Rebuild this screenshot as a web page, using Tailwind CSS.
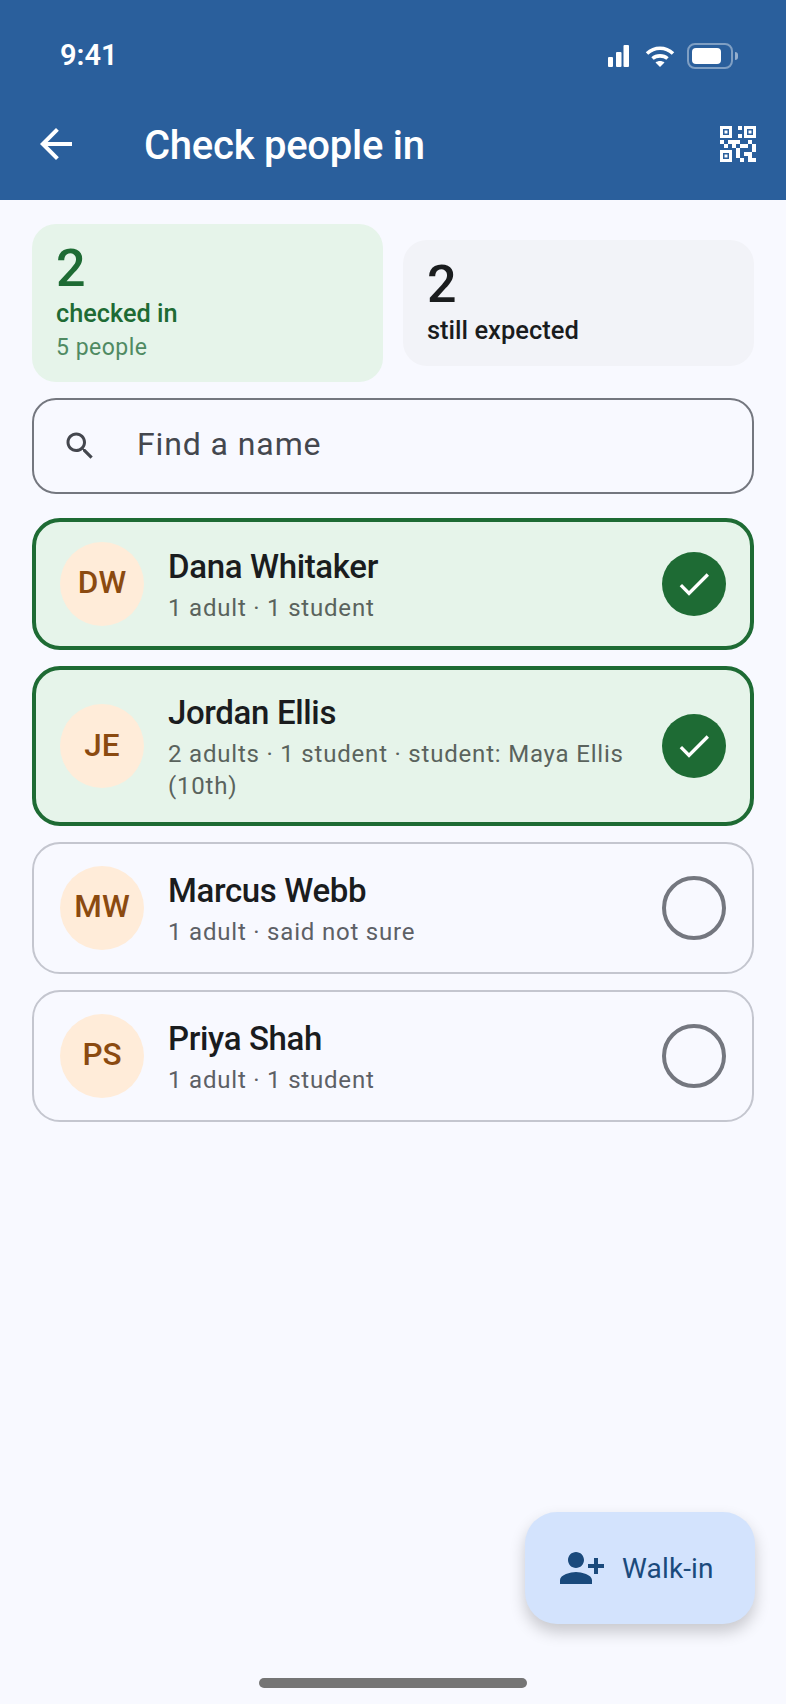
<!DOCTYPE html>
<html lang="en">
<head>
  <meta charset="UTF-8"/>
  <meta name="viewport" content="width=device-width, initial-scale=1.0"/>
  <title>Check people in</title>
  <script src="https://cdn.jsdelivr.net/npm/@tailwindcss/browser@4"></script>
</head>
<body class="bg-[#f8f9ff] font-['Roboto',sans-serif]">
<div class="relative w-[786px] h-[1704px] overflow-hidden bg-[#f8f9ff]">

  <!-- Header -->
  <header class="h-[200px] bg-[#2a5f9c] text-white">
    <!-- Status bar -->
    <div class="h-[112px] pl-[60px] pr-[48px] pt-[38px] flex justify-between items-start">
      <span class="text-[29px] leading-[34px] font-semibold">9:41</span>
      <div class="flex items-center pt-[5px]">
        <svg width="21" height="22" viewBox="0 0 21 22" fill="#fff"><rect x="0" y="12" width="5" height="10" rx="1"/><rect x="8" y="7" width="5.500" height="15" rx="1"/><rect x="15.500" y="0" width="5.500" height="22" rx="1"/></svg>
        <svg class="ml-[16px]" width="30" height="22" viewBox="0 0 30 22" fill="none" stroke="#fff" stroke-width="3.6"><path d="M2 8.5C9.5 1.5 20.500 1.500 28 8.500"/><path d="M7.500 13.500C11.500 10 18.500 10 22.500 13.500"/><path d="M15 22l-4.500-4.500c2.500-2 6.500-2 9 0z" fill="#fff" stroke="none"/></svg>
        <div class="ml-[12px] w-[46px] h-[26px] rounded-[8px] border-2 border-white/40 p-[3px]">
          <div class="w-[29px] h-[16px] rounded-[4px] bg-white"></div>
        </div>
        <div class="ml-[2px] w-[3px] h-[8px] rounded-r-full bg-white/50"></div>
      </div>
    </div>
    <!-- Toolbar -->
    <div class="h-[64px] pl-[32px] pr-[24px] flex items-center">
      <svg width="48" height="48" viewBox="0 0 24 24" fill="#fff"><path d="M20 11H7.830l5.590-5.590L12 4l-8 8 8 8 1.410-1.410L7.830 13H20v-2z"/></svg>
      <h1 class="ml-[64px] pt-[4px] flex-1 text-[40px] leading-[48px] font-medium tracking-[-0.25px]">Check people in</h1>
      <svg width="48" height="48" viewBox="0 0 24 24" fill="#fff"><path d="M15,21h-2v-2h2V21z M13,14h-2v5h2V14z M21,12h-2v4h2V12z M19,10h-2v2h2V10z M7,12H5v2h2V12z M5,10H3v2h2V10z M12,5h2V3h-2V5z M4.500,4.500v3h3v-3H4.500z M9,9H3V3h6V9z M4.500,16.500v3h3v-3H4.500z M9,21H3v-6h6V21z M16.500,4.500v3h3v-3H16.500z M21,9h-6V3h6V9z M19,19v-3l-4,0v2h2v3h4v-2H19z M17,12l-4,0v2h4V12z M13,10H7v2h2v2h2v-2h2V10z M14,9V7h-2v2H14z M6.750,5.250h-1.500v1.500h1.500V5.250z M6.750,17.250h-1.500v1.500h1.500V17.250z M18.750,5.250h-1.500v1.500h1.500V5.250z"/></svg>
    </div>
  </header>

  <main class="px-[32px] pt-[24px]">
    <!-- Stats -->
    <div class="flex items-center gap-[20px]">
      <div class="flex-1 rounded-[24px] bg-[#e6f4ea] px-[24px] pt-[20px] pb-[18px]">
        <p class="text-[52px] leading-[50px] font-medium text-[#1e6b34]">2</p>
        <p class="mt-[2px] text-[25.300px] leading-[36px] font-medium text-[#1e6b34]">checked in</p>
        <p class="text-[23px] leading-[32px] tracking-[0.5px] text-[#4f8a62]">5 people</p>
      </div>
      <div class="flex-1 rounded-[24px] bg-[#f2f3f8] px-[24px] pt-[20px] pb-[18px]">
        <p class="text-[52px] leading-[50px] font-medium text-[#1a1c1e]">2</p>
        <p class="mt-[2px] text-[25.500px] leading-[36px] font-medium text-[#1a1c1e]">still expected</p>
      </div>
    </div>

    <!-- Search -->
    <div class="mt-[16px] h-[96px] rounded-[24px] border-2 border-[#74777f] flex items-center pl-[28px]">
      <svg width="36" height="36" viewBox="0 0 24 24" fill="#44474e"><path d="M15.500 14h-.790l-.280-.270C15.410 12.590 16 11.110 16 9.500 16 5.910 13.090 3 9.500 3S3 5.910 3 9.500 5.910 16 9.500 16c1.610 0 3.090-.590 4.230-1.570l.270.280v.790l5 4.990L20.490 19l-4.990-5zm-6 0C7.010 14 5 11.990 5 9.500S7.010 5 9.500 5 14 7.010 14 9.500 11.990 14 9.500 14z"/></svg>
      <span class="ml-[39px] pb-[4px] text-[32px] tracking-[0.9px] text-[#44474e]">Find a name</span>
    </div>

    <!-- Guest list -->
    <ul class="mt-[24px] flex flex-col gap-[16px]">
      <li class="h-[132px] rounded-[28px] border-4 border-[#1e6b34] bg-[#e6f4ea] flex items-center px-[24px] gap-[24px]">
        <div class="w-[84px] h-[84px] shrink-0 rounded-full bg-[#ffecd9] flex items-center justify-center pb-[2px] text-[31.500px] font-medium text-[#8b4a10]">DW</div>
        <div class="flex-1 pt-[2px]">
          <p class="text-[33px] leading-[40px] tracking-[-0.35px] font-medium text-[#1a1c1e]">Dana Whitaker</p>
          <p class="mt-[5px] text-[24px] leading-[32px] tracking-[0.8px] text-[#5a635d]">1 adult · 1 student</p>
        </div>
        <div class="w-[64px] h-[64px] shrink-0 rounded-full bg-[#1e6b34] flex items-center justify-center">
          <svg width="40" height="40" viewBox="0 0 24 24" fill="#fff"><path d="M9 16.170L4.830 12l-1.420 1.410L9 19 21 7l-1.410-1.410z"/></svg>
        </div>
      </li>
      <li class="h-[160px] rounded-[28px] border-4 border-[#1e6b34] bg-[#e6f4ea] flex items-center px-[24px] gap-[24px]">
        <div class="w-[84px] h-[84px] shrink-0 rounded-full bg-[#ffecd9] flex items-center justify-center text-[31.500px] font-medium text-[#8b4a10]">JE</div>
        <div class="flex-1 pt-[2px]">
          <p class="text-[33px] leading-[40px] tracking-[-0.35px] font-medium text-[#1a1c1e]">Jordan Ellis</p>
          <p class="mt-[5px] text-[24px] leading-[32px] tracking-[0.8px] text-[#5a635d]">2 adults · 1 student · student: Maya Ellis (10th)</p>
        </div>
        <div class="w-[64px] h-[64px] shrink-0 rounded-full bg-[#1e6b34] flex items-center justify-center">
          <svg width="40" height="40" viewBox="0 0 24 24" fill="#fff"><path d="M9 16.170L4.830 12l-1.420 1.410L9 19 21 7l-1.410-1.410z"/></svg>
        </div>
      </li>
      <li class="h-[132px] rounded-[28px] border-2 border-[#c4c6cf] flex items-center px-[26px] gap-[24px]">
        <div class="w-[84px] h-[84px] shrink-0 rounded-full bg-[#ffecd9] flex items-center justify-center pb-[2px] text-[31.500px] font-medium text-[#8b4a10]">MW</div>
        <div class="flex-1 pt-[2px]">
          <p class="text-[33px] leading-[40px] tracking-[-0.35px] font-medium text-[#1a1c1e]">Marcus Webb</p>
          <p class="mt-[5px] text-[24px] leading-[32px] tracking-[0.8px] text-[#5d6066]">1 adult · said not sure</p>
        </div>
        <div class="w-[64px] h-[64px] shrink-0 rounded-full border-4 border-[#74777f]"></div>
      </li>
      <li class="h-[132px] rounded-[28px] border-2 border-[#c4c6cf] flex items-center px-[26px] gap-[24px]">
        <div class="w-[84px] h-[84px] shrink-0 rounded-full bg-[#ffecd9] flex items-center justify-center pb-[2px] text-[31.500px] font-medium text-[#8b4a10]">PS</div>
        <div class="flex-1 pt-[2px]">
          <p class="text-[33px] leading-[40px] tracking-[-0.35px] font-medium text-[#1a1c1e]">Priya Shah</p>
          <p class="mt-[5px] text-[24px] leading-[32px] tracking-[0.8px] text-[#5d6066]">1 adult · 1 student</p>
        </div>
        <div class="w-[64px] h-[64px] shrink-0 rounded-full border-4 border-[#74777f]"></div>
      </li>
    </ul>
  </main>

  <!-- Walk-in FAB -->
  <button class="absolute left-[525px] top-[1512px] w-[230px] h-[112px] rounded-[32px] bg-[#d3e3fd] flex items-center pl-[33px] shadow-[0_8px_16px_rgba(0,0,0,0.2)] text-[#1a4a7c]">
    <svg width="48" height="48" viewBox="0 0 24 24" fill="#1a4a7c"><path d="M13 8c0-2.210-1.790-4-4-4S5 5.790 5 8s1.790 4 4 4 4-1.790 4-4zm2 2v2h3v3h2v-3h3v-2h-3V7h-2v3h-3zM1 18v2h16v-2c0-2.660-5.330-4-8-4s-8 1.340-8 4z"/></svg>
    <span class="ml-[16px] pt-[2px] text-[28px] tracking-[0.15px]">Walk-in</span>
  </button>

  <!-- Home indicator -->
  <div class="absolute left-[259px] top-[1678px] w-[268px] h-[10px] rounded-full bg-[#757575]"></div>
</div>
</body>
</html>
